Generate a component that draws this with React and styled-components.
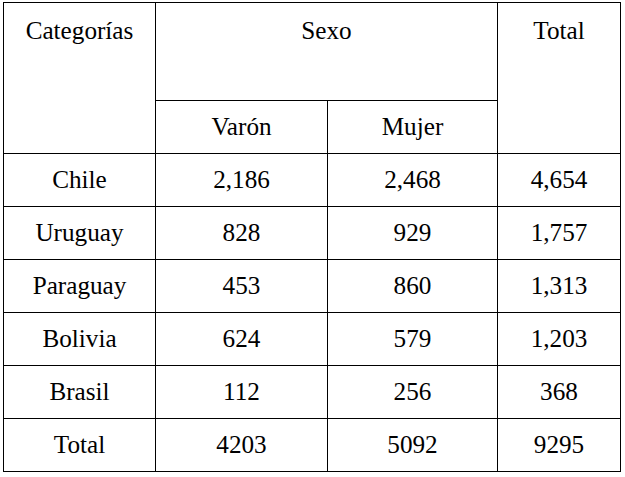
import styled, { createGlobalStyle } from 'styled-components'

const serif = 'Tinos, "Liberation Serif", "Times New Roman", serif'

const GlobalStyle = createGlobalStyle`
    body {
        margin: 0;
        background: #fff;
    }
`

const Page = styled.div`
    padding: 2px 0 0 3px;
`

// grid with 1px gaps over a black ground draws the rules

const Table = styled.div`
    display: grid;
    grid-template-columns: 151px 171px 169px 122px;
    grid-template-rows: 97px 52px repeat(6, 52px);
    gap: 1px;
    padding: 1px;
    width: max-content;
    background: #000;
    color: #000;
`

const Cell = styled.div`
    padding-top: ${props => props.$top ? '14px' : '0'};
    line-height: ${props => props.$top ? 'normal' : '52px'};
    text-align: center;
    background: #fff;
    font-family: ${serif};
    font-size: 25.2px;
    font-weight: 400;
    font-style: normal;
    grid-column: ${props => props.$cols || 'auto'};
    grid-row: ${props => props.$rows || 'auto'};
`

const rows = [
    ['Chile', '2,186', '2,468', '4,654'],
    ['Uruguay', '828', '929', '1,757'],
    ['Paraguay', '453', '860', '1,313'],
    ['Bolivia', '624', '579', '1,203'],
    ['Brasil', '112', '256', '368'],
    ['Total', '4203', '5092', '9295'],
]

export default function App() {
    return (
        <Page>
            <GlobalStyle />
            <Table>
                <Cell $top $rows="1 / 3">Categorías</Cell>
                <Cell $top $cols="2 / 4">Sexo</Cell>
                <Cell $top $rows="1 / 3" $cols="4 / 5">Total</Cell>
                <Cell $cols="2 / 3">Varón</Cell>
                <Cell $cols="3 / 4">Mujer</Cell>
                {rows.map(row => row.map((value, i) => (
                    <Cell key={row[0] + i}>{value}</Cell>
                )))}
            </Table>
        </Page>
    )
}
